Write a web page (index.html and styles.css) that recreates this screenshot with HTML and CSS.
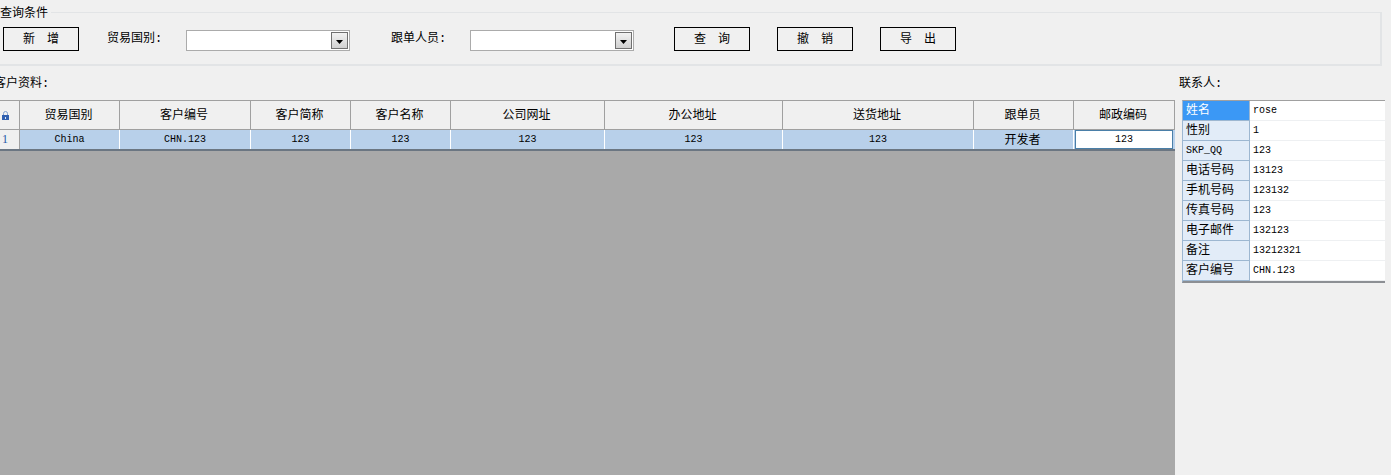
FILE: index.html
```html
<!DOCTYPE html>
<html lang="zh-CN">
<head>
<meta charset="utf-8">
<title>客户资料</title>
<link rel="stylesheet" href="styles.css">
</head>
<body>
<section class="group">
  <span class="legend">查询条件</span>
  <div class="toolbar">
    <button class="btn">新　增</button>
    <label class="label label-first">贸易国别:</label>
    <div class="combo combo-first"><span class="combo-btn"><svg width="7" height="4" viewBox="0 0 7 4"><path d="M0 0H7L3.5 4Z" fill="#000"/></svg></span></div>
    <label class="label label-second">跟单人员:</label>
    <div class="combo combo-second"><span class="combo-btn"><svg width="7" height="4" viewBox="0 0 7 4"><path d="M0 0H7L3.5 4Z" fill="#000"/></svg></span></div>
    <button class="btn btn-query">查　询</button>
    <button class="btn btn-next">撤　销</button>
    <button class="btn btn-next">导　出</button>
  </div>
</section>
<main class="content">
  <div class="left">
    <div class="title title-left">客户资料:</div>
    <div class="grid-area">
      <div class="row head">
        <div class="cell c0"><svg class="lock" width="7" height="9" viewBox="0 0 7 9"><path d="M1.5 4V2.5a2 2 0 0 1 4 0V4" fill="none" stroke="#7f9fd0"/><rect x="0" y="4" width="7" height="5" fill="#2f5fb0"/><rect x="3" y="6" width="1" height="2" fill="#dfe8f5"/></svg></div>
        <div class="cell c1">贸易国别</div>
        <div class="cell c2">客户编号</div>
        <div class="cell c3">客户简称</div>
        <div class="cell c4">客户名称</div>
        <div class="cell c5">公司网址</div>
        <div class="cell c6">办公地址</div>
        <div class="cell c7">送货地址</div>
        <div class="cell c8">跟单员</div>
        <div class="cell c9">邮政编码</div>
      </div>
      <div class="row data">
        <div class="cell c0 index">1</div>
        <div class="cell c1 mono">China</div>
        <div class="cell c2 mono">CHN.123</div>
        <div class="cell c3 mono">123</div>
        <div class="cell c4 mono">123</div>
        <div class="cell c5 mono">123</div>
        <div class="cell c6 mono">123</div>
        <div class="cell c7 mono">123</div>
        <div class="cell c8 cjk">开发者</div>
        <div class="cell c9 mono active">123</div>
      </div>
    </div>
  </div>
  <aside class="right">
    <div class="title title-right">联系人:</div>
    <div class="props">
      <div class="prop"><div class="key selected">姓名</div><div class="val mono">rose</div></div>
      <div class="prop"><div class="key">性别</div><div class="val mono">1</div></div>
      <div class="prop"><div class="key mono">SKP_QQ</div><div class="val mono">123</div></div>
      <div class="prop"><div class="key">电话号码</div><div class="val mono">13123</div></div>
      <div class="prop"><div class="key">手机号码</div><div class="val mono">123132</div></div>
      <div class="prop"><div class="key">传真号码</div><div class="val mono">123</div></div>
      <div class="prop"><div class="key">电子邮件</div><div class="val mono">132123</div></div>
      <div class="prop"><div class="key">备注</div><div class="val mono">13212321</div></div>
      <div class="prop"><div class="key">客户编号</div><div class="val mono">CHN.123</div></div>
    </div>
  </aside>
</main>
</body>
</html>
```
FILE: styles.css
```css
* { box-sizing: border-box; }
html, body { height: 100%; }
body {
  margin: 0;
  height: 475px;
  overflow: hidden;
  background: #f0f0f0;
  color: #000;
  font: 12px/14px "Noto Sans CJK SC", "Liberation Sans", sans-serif;
  display: flex;
  flex-direction: column;
}
.group {
  position: relative;
  margin: 12px 9px 0 0;
  height: 54px;
  flex: none;
  border: 1px solid #e2e4e6;
  border-width: 1px 2px 2px 0;
}
.legend {
  position: absolute;
  left: 0;
  top: -8px;
  padding-right: 3px;
  background: #f0f0f0;
}
.toolbar {
  display: flex;
  align-items: flex-start;
  padding: 14px 0 0 3px;
}
.btn {
  flex: none;
  width: 76px;
  height: 24px;
  padding: 0 0 2px;
  background: #f0f0f0;
  border: 1px solid #000;
  border-radius: 0;
  color: #000;
  font: inherit;
  line-height: 20px;
}
.label {
  flex: none;
  width: 55px;
  white-space: nowrap;
  line-height: 24px;
  font-family: "Liberation Mono", "Noto Sans CJK SC", monospace;
}
.label-first { margin-left: 28px; }
.label-second { margin-left: 41px; }
.combo {
  flex: none;
  display: flex;
  justify-content: flex-end;
  width: 164px;
  height: 21px;
  margin-top: 3px;
  padding: 1px;
  background: #fff;
  border: 1px solid #ababab;
}
.combo-first { margin-left: 24px; }
.combo-second { margin-left: 24px; }
.combo-btn {
  display: flex;
  align-items: center;
  justify-content: center;
  width: 17px;
  height: 17px;
  padding-top: 3px;
  background: linear-gradient(#f2f2f2, #d0d0d0);
  border: 1px solid #707070;
}
.btn-query { margin-left: 40px; }
.btn-next { margin-left: 27px; }
.content {
  flex: 1;
  display: flex;
  min-height: 0;
}
.left {
  flex: none;
  width: 1175px;
  display: flex;
  flex-direction: column;
  overflow: hidden;
}
.right { flex: 1; min-width: 0; }
.title {
  height: 34px;
  padding-top: 11px;
  font-family: "Liberation Mono", "Noto Sans CJK SC", monospace;
}
.title-left { margin-left: -6px; }
.title-right { padding-left: 4px; }
.grid-area { flex: 1; background: #a9a9a9; }
.row { display: flex; background: #f0f0f0; }
.head { height: 30px; border-top: 1px solid #a0a0a0; border-bottom: 1px solid #a0a0a0; }
.data { height: 21px; background: #b8d0ea; border-bottom: 2px solid #6b7682; }
.cell {
  flex: none;
  display: flex;
  align-items: center;
  justify-content: center;
  border-right: 1px solid #a0a0a0;
}
.head .cell { padding: 0 2px 2px 0; }
.data .cell { border-right-color: #fff; padding-top: 1px; }
.data .cjk { padding: 0 2px 1px 0; }
.c0 { width: 20px; }
.head .c0 { justify-content: flex-start; padding: 1px 0 0 2px; }
.c1 { width: 100px; }
.c2 { width: 131px; }
.c3, .c4 { width: 100px; }
.c5 { width: 154px; }
.c6 { width: 178px; }
.c7 { width: 191px; }
.c8 { width: 100px; }
.c9 { width: 100px; }
.head .c9 { width: 101px; }
.data .c0 {
  justify-content: flex-start;
  padding: 0 0 1px 2px;
  background: #f0f0f0;
  color: #1f5aa8;
  border-right: 1px solid #a0a0a0;
}
.data .active {
  width: 98px;
  margin-left: 1px;
  padding: 1px 0 0;
  background: #fff;
  border: 1px solid #4a7fa8;
}
.mono { font-family: "Liberation Mono", monospace; font-size: 10px; }
.index { font-size: 12px; font-family: "Liberation Serif", serif; }
.props {
  width: 203px;
  margin-left: 7px;
  background: #fff;
  border-top: 1px solid #a0a0a0;
  border-bottom: 2px solid #8c8f94;
  border-left: 1px solid #9db7d1;
}
.prop { display: flex; height: 20px; }
.key {
  flex: none;
  width: 67px;
  padding: 0 0 3px 3px;
  display: flex;
  align-items: center;
  background: #e2ecf8;
  border-right: 1px solid #9db7d1;
  border-bottom: 1px solid #9db7d1;
}
.key.selected { background: #3b98f5; color: #fff; }
.key.mono { font-size: 10px; padding-bottom: 0; }
.val {
  flex: 1;
  padding-left: 3px;
  display: flex;
  align-items: center;
  border-bottom: 1px solid #eef0f2;
}
```
